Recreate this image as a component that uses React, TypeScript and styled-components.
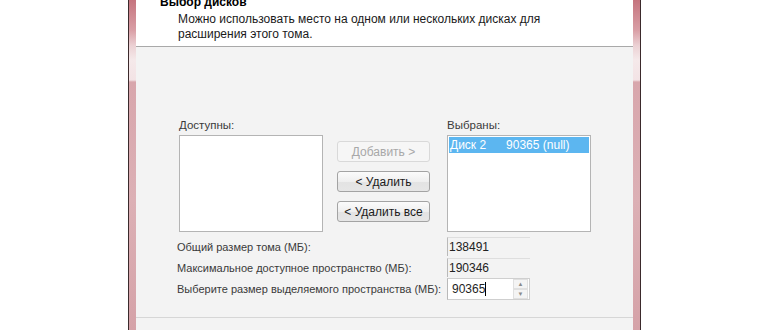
import React from "react";
import { styled, createGlobalStyle } from "styled-components";

const Global = createGlobalStyle`
  html, body {
    margin: 0;
    padding: 0;
    background: #ffffff;
    overflow: hidden;
  }
  body {
    font-family: "Liberation Sans", Arial, sans-serif;
    font-size: 12px;
    color: #1e1e1e;
  }
`;

const Page = styled.div`
  width: 770px;
  height: 330px;
  display: flex;
  padding-left: 128px;
  box-sizing: border-box;
  overflow: hidden;
`;

const WindowFrame = styled.div`
  width: 513px;
  height: 360px;
  box-sizing: border-box;
  border-left: 1px solid #3b2a2c;
  border-right: 1px solid #3b2a2c;
  padding: 0 7px;
  background: linear-gradient(
    180deg,
    #c5747e 0px,
    #d99ea5 30px,
    #ecd2d5 46px,
    #f5e9ea 60px,
    #f3e3e5 80px,
    #d8a6ac 82px,
    #dcb0b5 200px,
    #d5a2a8 330px
  );
  display: flex;
`;

const Inner = styled.div`
  flex: 1;
  display: flex;
  flex-direction: column;
  background: #f3f3f3;
`;

const Header = styled.div`
  height: 46px;
  background: #ffffff;
  border-bottom: 1px solid #a9a9a9;
  box-sizing: content-box;
  display: flex;
  flex-direction: column;
  padding-left: 24px;
  overflow: hidden;
`;

const Title = styled.div`
  font-weight: 700;
  font-size: 12px;
  color: #000;
  line-height: 15px;
  margin-top: -5px;
`;

const Description = styled.div`
  padding-left: 18px;
  line-height: 15px;
  color: #1a1a1a;
  margin-top: 2px;
`;

const Body = styled.div`
  height: 271px;
  border-bottom: 1px solid #d6d6d6;
  box-sizing: border-box;
  padding: 71px 0 0 43px;
  display: flex;
  flex-direction: column;
`;

const Lists = styled.div`
  display: grid;
  grid-template-columns: 144px 14px 93px 17px 144px;
`;

const Caption = styled.div`
  line-height: 14px;
  font-size: 11.5px;
  color: #3a3a3a;
  height: 17px;
`;

const ListColumn = styled.div<{ $col: number }>`
  grid-column: ${(p) => p.$col};
  display: flex;
  flex-direction: column;
`;

const ListBox = styled.div`
  height: 97px;
  background: #ffffff;
  border: 1px solid #b4b4b4;
  box-sizing: border-box;
  padding: 1px;
`;

const ListItem = styled.div`
  background: #5cb6f0;
  color: #ffffff;
  height: 16px;
  line-height: 16px;
  padding-left: 1px;
  display: flex;
  gap: 20px;
`;

const Buttons = styled.div`
  grid-column: 3;
  display: flex;
  flex-direction: column;
  gap: 9px;
  padding-top: 23px;
`;

const Button = styled.div<{ $disabled?: boolean }>`
  height: 21px;
  box-sizing: border-box;
  border: 1px solid ${(p) => (p.$disabled ? "#d9d9d9" : "#a3a3a3")};
  border-radius: 3px;
  background: ${(p) =>
    p.$disabled
      ? "#f6f6f6"
      : "linear-gradient(180deg, #fbfbfb 0%, #efefef 50%, #e3e3e3 51%, #e6e6e6 100%)"};
  color: ${(p) => (p.$disabled ? "#a8a8a8" : "#1b1b1b")};
  display: flex;
  align-items: center;
  justify-content: center;
  line-height: 1;
`;

const Form = styled.div`
  display: grid;
  grid-template-columns: 270px 83px;
  grid-auto-rows: 21px;
  align-items: center;
  margin-top: 4px;
  margin-left: -2px;
`;

const FormLabel = styled.div`
  color: #3a3a3a;
  font-size: 11px;
  white-space: nowrap;
`;

const Value = styled.div`
  height: 19px;
  box-sizing: border-box;
  border-top: 1px solid #dedede;
  border-left: 1px solid #b9b9b9;
  display: flex;
  align-items: center;
  padding-left: 1px;
  color: #222;
`;

const SpinBox = styled.div`
  height: 22px;
  border: 1px solid #cfcfcf;
  border-left-color: #b9b9b9;
  background: #ffffff;
  display: flex;
  align-items: center;
  box-sizing: border-box;
  padding-left: 4px;
`;

const SpinText = styled.span`
  flex: 1;
  display: flex;
  align-items: center;
`;

const Caret = styled.span`
  display: inline-block;
  width: 1px;
  height: 14px;
  background: #000;
`;

const Spinner = styled.div`
  width: 15px;
  height: 20px;
  display: flex;
  flex-direction: column;
  margin-right: 1px;
`;

const SpinHalf = styled.div`
  flex: 1;
  border: 1px solid #e0e0e0;
  background: #f4f4f4;
  display: flex;
  align-items: center;
  justify-content: center;
  font-size: 6px;
  color: #8a8a8a;
`;

export default function App() {
  return (
    <>
      <Global />
      <Page>
        <WindowFrame>
          <Inner>
            <Header>
              <Title>Выбор дисков</Title>
              <Description>
                Можно использовать место на одном или нескольких дисках для
                <br />
                расширения этого тома.
              </Description>
            </Header>
            <Body>
              <Lists>
                <ListColumn $col={1}>
                  <Caption>Доступны:</Caption>
                  <ListBox />
                </ListColumn>
                <Buttons>
                  <Button $disabled>Добавить &gt;</Button>
                  <Button>&lt; Удалить</Button>
                  <Button>&lt; Удалить все</Button>
                </Buttons>
                <ListColumn $col={5}>
                  <Caption>Выбраны:</Caption>
                  <ListBox>
                    <ListItem>
                      <span>Диск 2</span>
                      <span>90365 (null)</span>
                    </ListItem>
                  </ListBox>
                </ListColumn>
              </Lists>
              <Form>
                <FormLabel>Общий размер тома (МБ):</FormLabel>
                <Value>138491</Value>
                <FormLabel>Максимальное доступное пространство (МБ):</FormLabel>
                <Value>190346</Value>
                <FormLabel>Выберите размер выделяемого пространства (МБ):</FormLabel>
                <SpinBox>
                  <SpinText>
                    90365
                    <Caret />
                  </SpinText>
                  <Spinner>
                    <SpinHalf>▲</SpinHalf>
                    <SpinHalf>▼</SpinHalf>
                  </Spinner>
                </SpinBox>
              </Form>
            </Body>
          </Inner>
        </WindowFrame>
      </Page>
    </>
  );
}
